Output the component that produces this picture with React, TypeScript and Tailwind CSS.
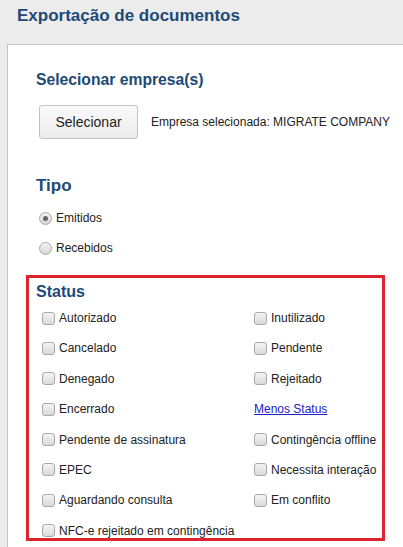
import React from 'react';

const font = { fontFamily: '"Liberation Sans", Arial, sans-serif' };

function Checkbox({ label }: { label: string }) {
  return (
    <label className="flex items-center gap-[4px] h-[14px] text-[12px] text-[#222]">
      <span className="w-[13px] h-[13px] rounded-[3px] border border-[#a9a9a9] bg-gradient-to-b from-[#f4f4f4] to-[#d9d9d9] shrink-0" />
      <span className="leading-[14px] whitespace-nowrap">{label}</span>
    </label>
  );
}

function Radio({ label, checked }: { label: string; checked?: boolean }) {
  return (
    <div className="flex items-center gap-[4px] h-[30px] text-[12px] text-[#222] pl-[3px]">
      <span className="w-[13px] h-[13px] rounded-full border border-[#a9a9a9] bg-gradient-to-b from-[#f4f4f4] to-[#d6d6d6] flex items-center justify-center shrink-0">
        {checked && <span className="w-[5px] h-[5px] rounded-full bg-[#666]" />}
      </span>
      <span>{label}</span>
    </div>
  );
}

const left = ['Autorizado', 'Cancelado', 'Denegado', 'Encerrado', 'Pendente de assinatura', 'EPEC', 'Aguardando consulta', 'NFC-e rejeitado em contingência'];
const right = ['Inutilizado', 'Pendente', 'Rejeitado', null, 'Contingência offline', 'Necessita interação', 'Em conflito'];

export default function App() {
  return (
    <div className="w-[403px] h-[547px] bg-[#ececec] overflow-hidden flex flex-col" style={font}>
      {/* Header */}
      <div className="h-[44px] shrink-0 pl-[17px] pt-[5px]">
        <h1 className="text-[17px] font-bold leading-[22px] text-[#1d4a76]">Exportação de documentos</h1>
      </div>

      {/* Panel */}
      <div className="flex-1 ml-[7px] bg-white border-l border-t border-[#c4c4c4] pl-[28px]">
        <h2 className="mt-[25px] text-[15.7px] font-bold leading-[20px] text-[#1d4a76]">Selecionar empresa(s)</h2>

        <div className="mt-[15px] flex items-center">
          <button className="ml-[3px] w-[99px] h-[34px] rounded-[3px] border border-[#c3c3c3] bg-gradient-to-b from-[#fafafa] to-[#ececec] text-[14px] text-[#222]">
            Selecionar
          </button>
          <span className="ml-[13px] text-[12px] text-[#222]">Empresa selecionada: MIGRATE COMPANY</span>
        </div>

        <h2 className="mt-[36px] text-[17px] font-bold leading-[22px] text-[#1d4a76]">Tipo</h2>
        <div className="mt-[6px] mb-[-1px]">
          <Radio label="Emitidos" checked />
          <Radio label="Recebidos" />
        </div>

        {/* Status box */}
        <div className="mt-[13px] -ml-[10px] w-[359px] h-[266px] border-[3px] border-[#dc2430]">
          <h2 className="mt-[4px] pl-[7px] text-[16px] font-bold leading-[20px] text-[#1d4a76]">Status</h2>
          <div className="mt-[9px] pl-[13px] grid grid-cols-[212px_1fr] gap-y-[16.4px]">
            {left.map((l, i) => (
              <React.Fragment key={l}>
                <Checkbox label={l} />
                {i < right.length ? (
                  right[i] ? (
                    <Checkbox label={right[i] as string} />
                  ) : (
                    <a href="#" className="text-[12px] leading-[14px] text-[#2020c8] underline">Menos Status</a>
                  )
                ) : (
                  <span />
                )}
              </React.Fragment>
            ))}
          </div>
        </div>
      </div>
    </div>
  );
}
